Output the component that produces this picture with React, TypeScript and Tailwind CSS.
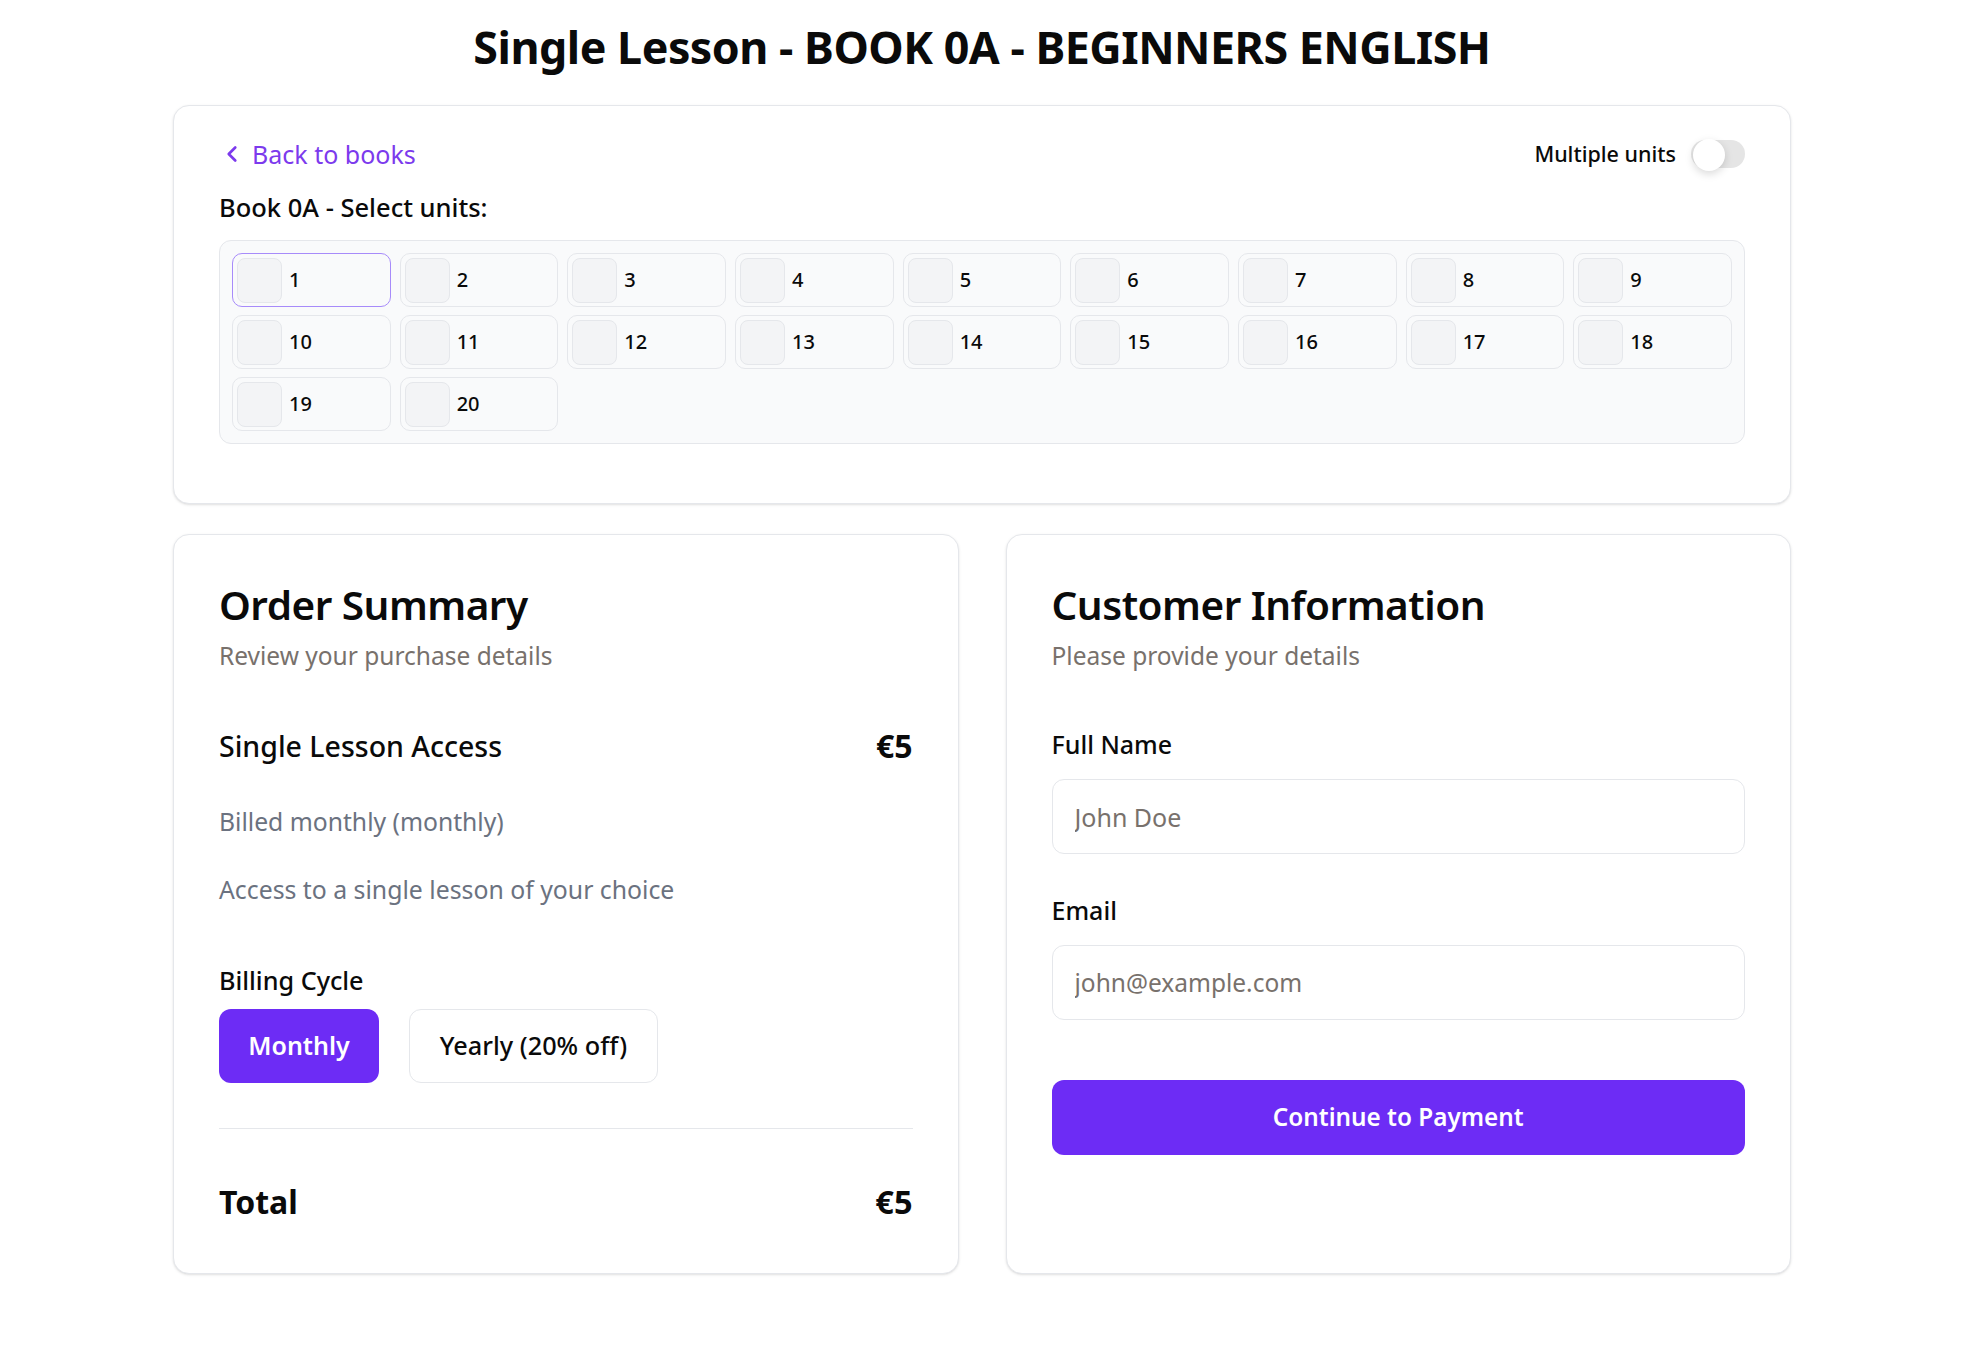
import React from "react";
import { ChevronLeft } from "lucide-react";

const units = Array.from({ length: 20 }, (_, i) => i + 1);

export default function App() {
  return (
    <div className="min-h-screen bg-white font-['Noto_Sans',sans-serif] text-[#0a0a0a]">
      <div className="pl-[173px] pt-[18px] pb-[60px]">
        <div className="w-[1618px]">
          <h1 className="text-center text-[44.8px] leading-[58px] font-bold tracking-[-0.5px]">
            Single Lesson - BOOK 0A - BEGINNERS ENGLISH
          </h1>

          {/* Units card */}
          <div className="mt-[29px] rounded-[16px] border border-[#e5e7eb] bg-white px-[45px] pt-[30px] pb-[59px] shadow-sm">
            <div className="flex h-[36px] items-center justify-between">
              <button className="flex items-center gap-[7px] text-[25px] leading-[36px] text-[#7c3aed]">
                <ChevronLeft size={26} strokeWidth={2.5} />
                <span>Back to books</span>
              </button>
              <div className="flex items-center gap-[15px]">
                <span className="text-[21.5px] font-medium">Multiple units</span>
                <div className="relative h-[28px] w-[54px] rounded-full bg-[#e5e5e5]">
                  <div className="absolute left-[2px] top-[-1px] h-[32px] w-[32px] rounded-full bg-white shadow-[0_3px_8px_rgba(0,0,0,0.15)]" />
                </div>
              </div>
            </div>
            <div className="mt-[20px] text-[25.5px] leading-[30px] font-medium">Book 0A - Select units:</div>
            <div className="mt-[18px] grid grid-cols-9 gap-x-[9px] gap-y-[8px] rounded-[12px] border border-[#e5e7eb] bg-[#f9fafb] p-[12px]">
              {units.map((u) => (
                <div
                  key={u}
                  className={
                    u === 1
                      ? "flex h-[54px] items-center gap-[7px] rounded-[10px] border border-[#a78bfa] bg-[#f9fafb] pl-[4px]"
                      : "flex h-[54px] items-center gap-[7px] rounded-[10px] border border-[#e5e7eb] bg-[#f9fafb] pl-[4px]"
                  }
                >
                  <div className="h-[45px] w-[45px] rounded-[8px] border border-[#e5e7eb] bg-[#f3f4f6]" />
                  <span className="text-[20px] font-medium">{u}</span>
                </div>
              ))}
            </div>
          </div>

          <div className="mt-[30px] grid grid-cols-2 gap-[47px]">
            {/* Order summary */}
            <div className="rounded-[16px] border border-[#e5e7eb] bg-white px-[45px] pt-[46px] pb-[51px] shadow-sm">
              <h2 className="text-[40.5px] leading-[48px] font-semibold tracking-[-0.5px]">Order Summary</h2>
              <p className="mt-[12px] text-[24.5px] leading-[30px] text-[#78716c]">Review your purchase details</p>
              <div className="mt-[58px] flex h-[34px] items-center justify-between">
                <span className="text-[28.5px] font-medium">Single Lesson Access</span>
                <span className="text-[32px] font-bold">€5</span>
              </div>
              <p className="mt-[44px] text-[24.7px] leading-[30px] text-[#6b7280]">Billed monthly (monthly)</p>
              <p className="mt-[37px] text-[24.8px] leading-[30px] text-[#6b7280]">Access to a single lesson of your choice</p>
              <div className="mt-[61px] text-[25.2px] leading-[30px] font-medium">Billing Cycle</div>
              <div className="mt-[14px] flex gap-[30px]">
                <button className="h-[74px] w-[160px] rounded-[12px] bg-[#6d2cf5] text-[25px] font-semibold text-white">
                  Monthly
                </button>
                <button className="h-[74px] w-[249px] rounded-[12px] border border-[#e5e7eb] bg-white text-[25.3px] font-medium">
                  Yearly (20% off)
                </button>
              </div>
              <div className="mt-[45px] h-px bg-[#e5e7eb]" />
              <div className="mt-[53px] flex h-[40px] items-center justify-between">
                <span className="text-[32px] font-bold">Total</span>
                <span className="text-[32.5px] font-bold">€5</span>
              </div>
            </div>

            {/* Customer information */}
            <div className="rounded-[16px] border border-[#e5e7eb] bg-white px-[45px] pt-[46px] shadow-sm">
              <h2 className="text-[40.5px] leading-[48px] font-semibold tracking-[-0.5px]">Customer Information</h2>
              <p className="mt-[12px] text-[24.5px] leading-[30px] text-[#78716c]">Please provide your details</p>
              <div className="mt-[58px] text-[25px] leading-[30px] font-medium">Full Name</div>
              <input
                placeholder="John Doe"
                className="mt-[20px] block h-[75px] w-full rounded-[12px] border border-[#e5e7eb] bg-white px-[22px] text-[25px] outline-none placeholder:text-[#78716c]"
              />
              <div className="mt-[41px] text-[25px] leading-[30px] font-medium">Email</div>
              <input
                placeholder="john@example.com"
                className="mt-[20px] block h-[75px] w-full rounded-[12px] border border-[#e5e7eb] bg-white px-[22px] text-[24.5px] outline-none placeholder:text-[#78716c]"
              />
              <button className="mt-[60px] h-[75px] w-full rounded-[12px] bg-[#6d2cf5] text-[24.3px] font-semibold text-white">
                Continue to Payment
              </button>
            </div>
          </div>
        </div>
      </div>
    </div>
  );
}
